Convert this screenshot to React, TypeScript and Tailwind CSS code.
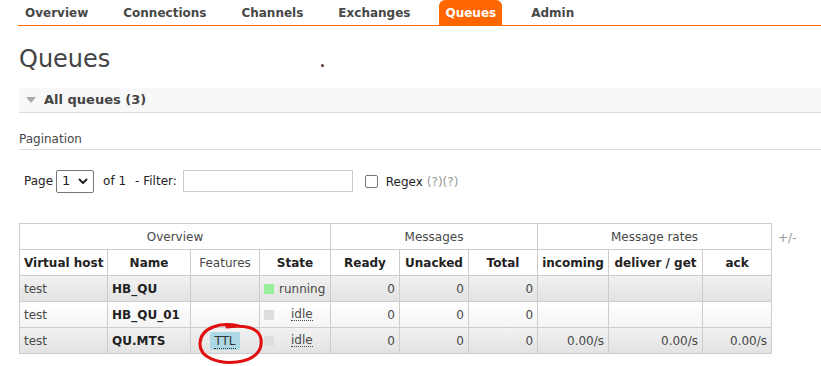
import React from 'react';

const tabs = ['Overview', 'Connections', 'Channels', 'Exchanges', 'Queues', 'Admin'];

type Row = {
  vhost: string;
  name: string;
  ttl: boolean;
  state: 'running' | 'idle';
  rates: boolean;
};

const rows: Row[] = [
  { vhost: 'test', name: 'HB_QU', ttl: false, state: 'running', rates: false },
  { vhost: 'test', name: 'HB_QU_01', ttl: false, state: 'idle', rates: false },
  { vhost: 'test', name: 'QU.MTS', ttl: true, state: 'idle', rates: true },
];

const cell = 'border border-[#cccccc] h-[26px] px-[4px] leading-none whitespace-nowrap';

const App: React.FC = () => {
  return (
    <div
      className="w-[821px] h-[366px] bg-white text-[12px] text-[#484848] overflow-hidden"
      style={{ fontFamily: '"DejaVu Sans", Verdana, sans-serif' }}
    >
      {/* nav */}
      <div className="ml-[18px] flex h-[26px] border-b border-[#ff6600]">
        <div className="flex items-end gap-[23px] ml-[1px]">
          {tabs.map((t) => (
            <div
              key={t}
              className={`h-[25px] flex items-center font-bold text-[12px] px-[6px] ${
                t === 'Queues' ? 'bg-[#ff6600] text-white rounded-t-[6px]' : 'text-[#484848]'
              }`}
            >
              {t}
            </div>
          ))}
        </div>
      </div>

      <div className="pl-[19px]">
        <div className="relative h-[62px]">
          <h1 className="pt-[18px] text-[24px] leading-[30px] text-[#444444]">Queues</h1>
          <span className="absolute left-[302px] top-[38px] w-[3px] h-[3px] rounded-full bg-[#5a3a30]" />
        </div>

        <div className="h-[25px] bg-[#f8f8f8] border-b border-[#dddddd] flex items-center">
          <svg width="10" height="6" viewBox="0 0 10 6" className="ml-[7px] mr-[8px]">
            <polygon points="0,0 10,0 5,6" fill="#aaaaaa" />
          </svg>
          <span className="font-bold text-[13px] text-[#444444]">All queues (3)</span>
        </div>

        <div className="mt-[20px] h-[17px] border-b border-[#dddddd] text-[12px] text-[#484848] leading-[12px]">
          Pagination
        </div>

        <div className="mt-[20px] flex items-center h-[22px] pl-[5px] text-[12px] text-[#222222]">
          <span>Page</span>
          <div className="ml-[3px] w-[38px] h-[23px] border border-[#767676] rounded-[2px] flex items-center justify-between pl-[5px] pr-[5px] text-[13px]">
            <span>1</span>
            <svg width="10" height="6" viewBox="0 0 10 6">
              <polyline points="1,1 5,5 9,1" fill="none" stroke="#222" strokeWidth="2" />
            </svg>
          </div>
          <span className="ml-[9px]">of 1</span>
          <span className="ml-[9px]">- Filter:</span>
          <div className="ml-[6px] w-[170px] h-[22px] border border-[#cccccc]" />
          <div className="ml-[12px] w-[13px] h-[13px] border border-[#767676] rounded-[2px]" />
          <span className="ml-[8px] mt-[2px]">Regex</span>
          <span className="ml-[4px] mt-[2px] text-[#999999]">(?)(?)</span>
        </div>

        <div className="mt-[31px] flex items-start">
          <table className="border-collapse text-[12px] table-fixed w-[753px]">
            <colgroup>
              <col className="w-[88px]" />
              <col className="w-[83px]" />
              <col className="w-[69px]" />
              <col className="w-[71px]" />
              <col className="w-[69px]" />
              <col className="w-[69px]" />
              <col className="w-[69px]" />
              <col className="w-[71px]" />
              <col className="w-[94px]" />
              <col className="w-[69px]" />
            </colgroup>
            <thead>
              <tr className="text-[#484848]">
                <th colSpan={4} className={`${cell} font-normal`}>Overview</th>
                <th colSpan={3} className={`${cell} font-normal`}>Messages</th>
                <th colSpan={3} className={`${cell} font-normal`}>Message rates</th>
              </tr>
              <tr className="text-[#222222]">
                <th className={`${cell} font-bold`}>Virtual host</th>
                <th className={`${cell} font-bold`}>Name</th>
                <th className={`${cell} font-normal text-[#484848]`}>Features</th>
                <th className={`${cell} font-bold`}>State</th>
                <th className={`${cell} font-bold`}>Ready</th>
                <th className={`${cell} font-bold`}>Unacked</th>
                <th className={`${cell} font-bold`}>Total</th>
                <th className={`${cell} font-bold`}>incoming</th>
                <th className={`${cell} font-bold`}>deliver / get</th>
                <th className={`${cell} font-bold`}>ack</th>
              </tr>
            </thead>
            <tbody>
              {rows.map((r, i) => (
                <tr
                  key={r.name}
                  className={
                    i % 2 === 0
                      ? 'bg-gradient-to-b from-[#f2f2f2] to-[#e2e2e2]'
                      : 'bg-gradient-to-b from-[#ffffff] to-[#f4f4f4]'
                  }
                >
                  <td className={cell}>{r.vhost}</td>
                  <td className={`${cell} font-bold text-[#222222]`}>{r.name}</td>
                  <td className={`${cell} text-center`}>
                    {r.ttl && (
                      <span className="relative inline-block">
                        <span className="inline-block bg-[#add8e6] text-[#333333] px-[4px] py-[3px] rounded-[2px]">
                          <span className="border-b border-dotted border-[#333333]">TTL</span>
                        </span>
                        <svg
                          width="68"
                          height="44"
                          viewBox="0 0 68 44"
                          className="absolute left-[-13px] top-[-10px] pointer-events-none"
                        >
                          <path
                            d="M42 4 C 24 0, 4 5, 3 21 C 2 36, 22 42, 40 40 C 56 38, 66 30, 64 17 C 62 6, 48 3, 30 5"
                            fill="none"
                            stroke="#e01010"
                            strokeWidth="3"
                            strokeLinecap="round"
                          />
                        </svg>
                      </span>
                    )}
                  </td>
                  <td className={cell}>
                    <div className="flex items-center">
                      <span
                        className={`w-[10px] h-[10px] mr-[5px] ${
                          r.state === 'running' ? 'bg-[#99ee99]' : 'bg-[#dddddd]'
                        }`}
                      />
                      {r.state === 'running' ? (
                        <span>running</span>
                      ) : (
                        <span className="ml-[12px] text-[#484848] border-b border-dotted border-[#484848]">
                          idle
                        </span>
                      )}
                    </div>
                  </td>
                  <td className={`${cell} text-right`}>0</td>
                  <td className={`${cell} text-right`}>0</td>
                  <td className={`${cell} text-right`}>0</td>
                  <td className={`${cell} text-right`}>{r.rates ? '0.00/s' : ''}</td>
                  <td className={`${cell} text-right`}>{r.rates ? '0.00/s' : ''}</td>
                  <td className={`${cell} text-right`}>{r.rates ? '0.00/s' : ''}</td>
                </tr>
              ))}
            </tbody>
          </table>
          <span className="ml-[6px] mt-[6px] text-[#999999]">+/-</span>
        </div>
      </div>
    </div>
  );
};

export default App;
